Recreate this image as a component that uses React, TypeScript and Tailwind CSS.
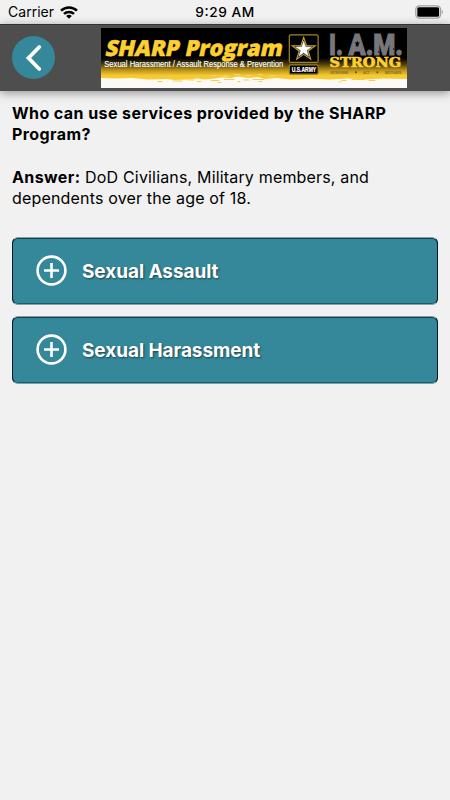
const topics = ["Sexual Assault", "Sexual Harassment"]

const STAR = "M0 -12 L2.8 -3.8 L11.4 -3.7 L4.5 1.5 L7 9.7 L0 4.8 L-7 9.7 L-4.5 1.5 L-11.4 -3.7 L-2.8 -3.8 Z"

function StatusBar() {
    return (
        <div className="flex h-6 shrink-0 items-center justify-between bg-[#f1f1f1] pl-2 pr-[6px] text-black">
            <div className="flex w-[150px] items-center gap-[6px]">
                <svg width="46" height="20" className="block">
                    <text x="0" y="15.3" textLength="46" className="text-[14px]">Carrier</text>
                </svg>
                <svg width="18" height="13" viewBox="0 0 18 13" fill="none" stroke="#000" strokeWidth="2.5" className="block">
                    <path d="M1 4.7 C5.5 .4 12.5 .4 17 4.7" />
                    <path d="M4 7.9 C6.8 5.2 11.2 5.2 14 7.9" />
                    <path d="M9 12.7 L6.2 9.9 C7.8 8.5 10.2 8.5 11.8 9.9 Z" fill="#000" stroke="none" />
                </svg>
            </div>
            <svg width="62" height="20" className="block">
                <text x="0.3" y="15.3" textLength="59" className="text-[13.7px] font-medium">9:29 AM</text>
            </svg>
            <div className="flex w-[150px] justify-end">
                <svg width="29" height="15" viewBox="0 0 29 15" className="block">
                    <rect x="0.8" y="0.8" width="24.8" height="12.4" rx="3.6" fill="none" stroke="#a0a0a0" strokeWidth="1.3" />
                    <rect x="2.3" y="2.3" width="21.8" height="9.4" rx="1.5" fill="#000" />
                    <path d="M26.8 4.7 Q29 7 26.8 9.3 Z" fill="#a0a0a0" />
                </svg>
            </div>
        </div>
    )
}

function Banner() {
    return (
        <svg width="306" height="60" viewBox="0 0 306 60" className="block">
            <defs>
                <linearGradient id="sky" x1="0" y1="0" x2="0" y2="1">
                    <stop offset="0" stopColor="#000" />
                    <stop offset="0.5" stopColor="#000" />
                    <stop offset="0.6" stopColor="#4a3b08" />
                    <stop offset="0.7" stopColor="#b8901a" />
                    <stop offset="0.79" stopColor="#f6c92f" />
                    <stop offset="1" stopColor="#ffd23a" />
                </linearGradient>
            </defs>
            <rect width="306" height="60" fill="url(#sky)" />
            {/* Torn paint edge */}
            <path
                d="M0 50 L14 50.5 L31 50 L48 51.5 L66 51 L73 52 L88 51.5 L96 50.5 L104 51.5 L114 50.5 L120 49.5 L130 50 L137 48.5 L147 50 L157 49 L164 51 L176 50 L190 51.5 L210 50.5 L228 51.5 L247 50.5 L264 51.5 L283 50.5 L306 51 V60 H0 Z"
                fill="#fbfaf7"
            />
            <g stroke="#f5cd57" strokeLinecap="round" strokeWidth="1">
                <path d="M57 53.5h4M72 53h9M88 52h5M96 53.5h4M110 52.5h8M123 51.5h10M143 52h5M152 51.5h11M241 52.5h4M251 51.5h12M268 52.5h6" />
                <path d="M117 54.5h3M137 53.5h2M158 53.5h3M238 53.8h2" />
            </g>
            <g stroke="#ffeeb0" strokeOpacity="0.6" strokeLinecap="round" strokeWidth="0.8">
                <path d="M111 47.5h4M122 48h5M133 46.5h6M145 47.5h5M157 46.5h4M168 48h6" />
            </g>

            <g transform="translate(3.4 27.8) skewX(-12)">
                <text x="0" y="0" textLength="177" lengthAdjust="spacingAndGlyphs" fill="#fdd02f" stroke="#fdd02f" strokeWidth="0.5" className="font-['Open_Sans'] text-[22px] font-extrabold">
                    SHARP Program
                </text>
            </g>
            <text x="3.3" y="38.6" textLength="179" lengthAdjust="spacingAndGlyphs" fill="#fff" stroke="#fff" strokeWidth="0.15" className="font-['Liberation_Sans'] text-[8.8px]">
                Sexual Harassment / Assault Response &amp; Prevention
            </text>

            {/* Army star */}
            <rect x="188.3" y="6.8" width="28.8" height="27.6" rx="1.5" fill="#000" stroke="#a08527" strokeWidth="1.2" />
            <g transform="translate(202.7 21.5)">
                <path d={STAR} fill="#000" stroke="#cda52a" strokeWidth="1.1" />
                <path d={STAR} transform="scale(.7)" fill="#fff" stroke="#ccc" strokeWidth="0.8" />
            </g>
            <rect x="188.3" y="36.8" width="28.8" height="9.4" rx="1.5" fill="#000" stroke="#9a8125" strokeWidth="1.2" />
            <text x="190.7" y="44.1" textLength="24.5" lengthAdjust="spacingAndGlyphs" fill="#fff" stroke="#fff" strokeWidth="0.2" className="font-['Liberation_Sans'] text-[7.4px] font-bold">
                U.S.ARMY
            </text>

            <g fill="#77777a" stroke="#77777a" strokeWidth="1" className="font-[Roboto] text-[29px] font-black">
                <text x="228" y="27.2" textLength="14" lengthAdjust="spacingAndGlyphs">I.</text>
                <text x="247.5" y="27.2" textLength="54.5" lengthAdjust="spacingAndGlyphs">A.M.</text>
            </g>
            {/* Worn spots in the stencil letters */}
            <path d={STAR} transform="translate(256.3 15.5) scale(.25)" fill="#000" />
            <path d="M282 10l1.5 1.5-1 1zM292 20l1.5 1-1.5 1zM277 23l1.5 1-1.5 1zM264 20l1 1-1.5 .5z" fill="#111" />
            <text x="228.5" y="38.7" textLength="71.5" lengthAdjust="spacingAndGlyphs" fill="#fdd02f" stroke="#fdd02f" strokeWidth="0.6" className="font-['DejaVu_Serif'] text-[12.4px] font-bold">
                STRONG
            </text>
            <g fill="#94772a" stroke="#94772a" strokeWidth="0.2" className="font-['Liberation_Sans'] text-[4.4px] font-bold">
                <text x="229.5" y="45.7" textLength="17.5" lengthAdjust="spacingAndGlyphs">INTERVENE</text>
                <text x="262" y="45.7" textLength="6.5" lengthAdjust="spacingAndGlyphs">ACT</text>
                <text x="284" y="45.7" textLength="16.5" lengthAdjust="spacingAndGlyphs">MOTIVATE</text>
            </g>
            <g fill="#5f4d1c">
                <circle cx="255" cy="44.2" r="1" />
                <circle cx="276.3" cy="44.2" r="1" />
            </g>
        </svg>
    )
}

function TopicButton({ label }: { label: string }) {
    return (
        <button className="flex h-[68px] w-full items-center gap-[15px] rounded-[6px] border border-x-[#04182a] border-y-[#8d9ea3] bg-[#35889a] pl-[23px] text-left shadow-[inset_0_1px_0_#0b4350,inset_0_-1px_0_#0a6374]">
            <svg width="31" height="31" viewBox="0 0 31 31" fill="none" stroke="#fff" className="mb-px block">
                <circle cx="15.5" cy="15.5" r="13.9" strokeWidth="2.6" />
                <path d="M15.5 8v15M8 15.5h15" strokeWidth="2.6" />
            </svg>
            <span className="mt-[2px] text-[19px] font-bold tracking-[-0.07px] text-white [text-shadow:1px_1px_2px_rgba(0,0,0,0.5)]">
                {label}
            </span>
        </button>
    )
}

export default function App() {
    return (
        <div className="flex h-[800px] w-[450px] flex-col overflow-hidden bg-[#f1f1f1] font-[Inter,sans-serif] text-black">
            <StatusBar />
            <header className="flex h-[67px] shrink-0 items-start border-t border-[#333] bg-[#4e4e4e] pl-3 shadow-[0_2px_9px_rgba(0,0,0,0.4)]">
                <button aria-label="Back" className="mt-[11px] flex size-[43px] items-center justify-center rounded-full bg-[#35889a]">
                    <svg width="18" height="28" viewBox="0 0 18 28" fill="none" stroke="#fff" strokeWidth="3.8" strokeLinecap="round">
                        <path d="M14.3 3 L3.5 14 L14.3 25" />
                    </svg>
                </button>
                <div className="ml-[46px] mt-[3px]">
                    <Banner />
                </div>
            </header>

            <main className="px-3 pt-3">
                <p className="text-[16px] font-bold leading-[20.5px] tracking-[0.42px]">
                    Who can use services provided by the SHARP
                    <br />
                    Program?
                </p>
                <p className="mt-[23px] text-[16px] leading-[20.5px] tracking-[0.17px]">
                    <b className="tracking-[0.4px]">Answer:</b> DoD Civilians, Military members, and
                    <br />
                    dependents over the age of 18.
                </p>
                <div className="mt-[29px] flex flex-col gap-[11px]">
                    {topics.map((topic) => (
                        <TopicButton key={topic} label={topic} />
                    ))}
                </div>
            </main>
        </div>
    )
}
